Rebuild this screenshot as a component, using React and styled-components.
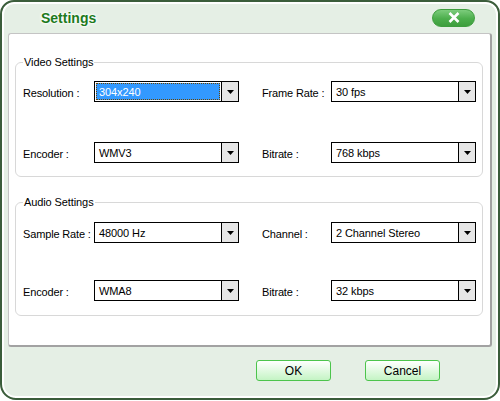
import React from 'react';
import styled, { createGlobalStyle } from 'styled-components';

const GlobalStyle = createGlobalStyle`
  html, body {
    margin: 0;
    padding: 0;
    background: #fff;
  }
  body {
    font-family: "Liberation Sans", Arial, sans-serif;
  }
`;

const Window = styled.div`
  box-sizing: border-box;
  width: 500px;
  height: 400px;
  border: 2px solid #3b5d3b;
  border-radius: 14px 14px 16px 16px;
  background: #e5efe5;
  box-shadow: inset 0 0 0 2px #fff;
  display: flex;
  flex-direction: column;
  overflow: hidden;
`;

const TitleBar = styled.div`
  height: 31px;
  display: flex;
  align-items: center;
  justify-content: space-between;
  padding: 0 23px 0 39px;
`;

const Title = styled.h1`
  margin: 0;
  font-size: 14px;
  font-weight: bold;
  color: #1d7a1d;
  text-shadow: 0 0 2px #fff, 0 0 3px #fff, 0 0 4px #fff;
`;

const CloseButton = styled.button`
  width: 43px;
  height: 18px;
  padding: 0;
  border: 1px solid #3e9d3e;
  border-radius: 9px;
  background: linear-gradient(#7ccc7c, #4cae4c 55%, #3e9e3e);
  display: flex;
  align-items: center;
  justify-content: center;
`;

const Panel = styled.div`
  box-sizing: border-box;
  height: 314px;
  margin: 0 6px;
  padding: 21px 7px 0 6px;
  background: #fff;
  border: 1px solid #c4c4c4;
  border-right: 2px solid #a2a2a2;
  border-bottom: 2px solid #a2a2a2;
  border-radius: 3px;
`;

const Group = styled.fieldset`
  margin: 0 0 ${p => p.$mb || 0}px;
  padding: ${p => p.$pt}px 6px ${p => p.$pb}px 7px;
  border: 1px solid #d8d8d8;
  border-radius: 6px;
  display: grid;
  grid-template-columns: 71px 145px 23px 69px 145px;
  row-gap: ${p => p.$gap}px;
  align-items: center;
`;

const Legend = styled.legend`
  padding: 0 1px;
  font-size: 11px;
  line-height: 14px;
  letter-spacing: -0.1px;
  color: #000;
`;

const Label = styled.span`
  font-size: 11px;
  letter-spacing: -0.15px;
  color: #000;
  padding-top: 2px;
  grid-column: ${p => p.$col};
  white-space: nowrap;
`;

const Select = styled.div`
  box-sizing: border-box;
  grid-column: ${p => p.$col};
  height: 21px;
  border: 1px solid #000;
  background: #fff;
  display: flex;
`;

const Value = styled.span`
  flex: 1;
  display: flex;
  align-items: center;
  font-size: 11px;
  letter-spacing: -0.1px;
  padding-left: 2px;
  margin: 1px;
  border: 1px solid transparent;
  ${p =>
    p.$focused &&
    `
    background: #3399ff;
    color: #fff;
    border: 1px dotted #6b4400;
  `}
`;

const Arrow = styled.span`
  width: 16px;
  border-left: 1px solid #000;
  background: #e6e6e6;
  display: flex;
  align-items: center;
  justify-content: center;
`;

const Footer = styled.div`
  flex: 1;
  display: flex;
  justify-content: flex-end;
  align-items: flex-start;
  gap: 34px;
  padding: 13px 58px 0 0;
`;

const DialogButton = styled.button`
  box-sizing: border-box;
  width: 75px;
  height: 21px;
  padding: 0;
  border: 1px solid #4cc44c;
  border-radius: 3px;
  background: linear-gradient(#ffffff, #c4f4c4);
  font-family: "Liberation Sans", Arial, sans-serif;
  font-size: 12px;
  color: #000;
`;

const DropArrow = () => (
  <svg width="7" height="4" viewBox="0 0 7 4">
    <polygon points="0,0 7,0 3.5,4" fill="#000" />
  </svg>
);

const CloseIcon = () => (
  <svg width="12" height="11" viewBox="0 0 12 11">
    <path d="M1.5 1 L10.5 10 M10.5 1 L1.5 10" stroke="#fff" strokeWidth="2.6" />
  </svg>
);

const Combo = ({ col, value, focused }) => (
  <Select $col={col}>
    <Value $focused={focused}>{value}</Value>
    <Arrow>
      <DropArrow />
    </Arrow>
  </Select>
);

const App = () => {
  return (
    <>
      <GlobalStyle />
      <Window>
        <TitleBar>
          <Title>Settings</Title>
          <CloseButton aria-label="Close">
            <CloseIcon />
          </CloseButton>
        </TitleBar>
        <Panel>
          <Group $pt={12} $pb={13} $gap={40} $mb={18}>
            <Legend>Video Settings</Legend>
            <Label $col={1}>Resolution :</Label>
            <Combo col={2} value="304x240" focused />
            <Label $col={4}>Frame Rate :</Label>
            <Combo col={5} value="30 fps" />
            <Label $col={1}>Encoder :</Label>
            <Combo col={2} value="WMV3" />
            <Label $col={4}>Bitrate :</Label>
            <Combo col={5} value="768 kbps" />
          </Group>
          <Group $pt={13} $pb={14} $gap={37}>
            <Legend>Audio Settings</Legend>
            <Label $col={1}>Sample Rate :</Label>
            <Combo col={2} value="48000 Hz" />
            <Label $col={4}>Channel :</Label>
            <Combo col={5} value="2 Channel Stereo" />
            <Label $col={1}>Encoder :</Label>
            <Combo col={2} value="WMA8" />
            <Label $col={4}>Bitrate :</Label>
            <Combo col={5} value="32 kbps" />
          </Group>
        </Panel>
        <Footer>
          <DialogButton>OK</DialogButton>
          <DialogButton>Cancel</DialogButton>
        </Footer>
      </Window>
    </>
  );
};

export default App;
